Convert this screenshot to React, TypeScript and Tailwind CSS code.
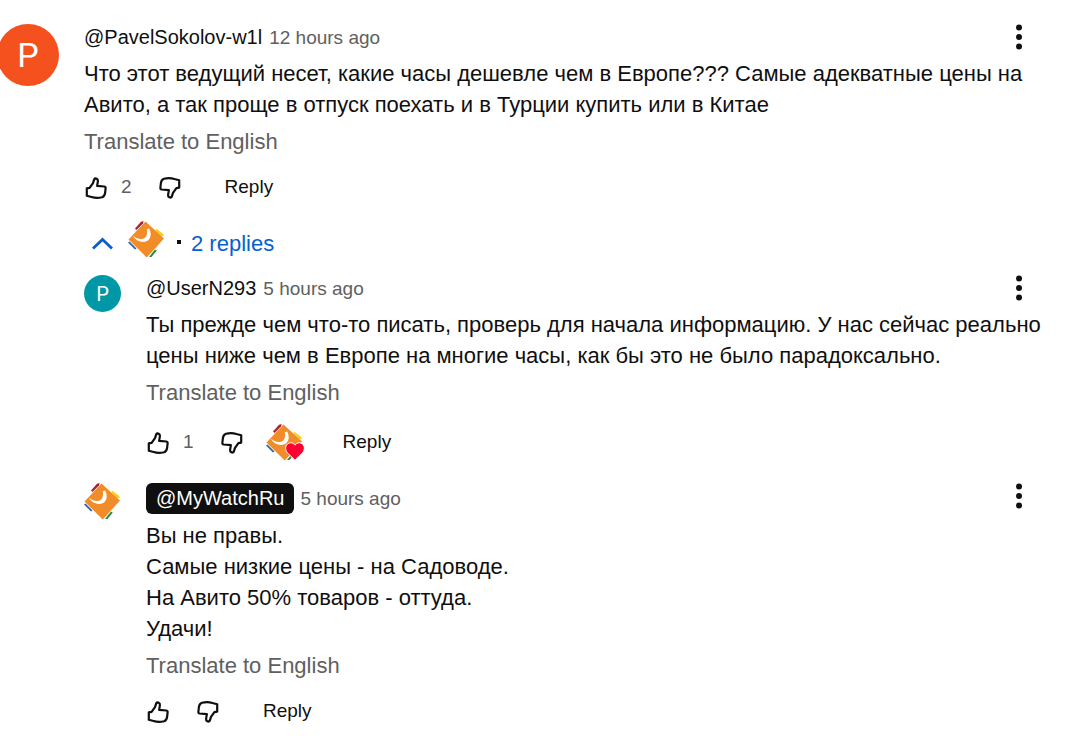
import type { ReactNode } from 'react'

type CommentProps = {
  author: string
  time: string
  lines: string[]
  avatar: ReactNode
  likes?: number
  hearted?: boolean
  isCreator?: boolean
}

const ThumbIcon = ({ down = false }: { down?: boolean }) => (
  <svg
    viewBox="0 0 24 24"
    className={`size-6 ${down ? 'rotate-180' : ''}`}
    fill="none"
    stroke="currentColor"
    strokeWidth="2.2"
    strokeLinejoin="round"
    aria-hidden="true"
  >
    <path d="M2.8 12.4 5.6 11.9 9 7.2 10.2 3.4Q11 2 12.7 2.8 14.2 3.6 13.9 5.4L13.1 9.9 20.4 10.5Q21.8 10.8 21.6 12.4L21.1 17Q20.6 20.4 18 21.2 12.6 22.6 7.6 21L2.8 19.8Z" />
  </svg>
)

const LetterAvatar = ({ letter, small = false }: { letter: string; small?: boolean }) => (
  <div
    className={`mt-0.5 flex items-center justify-center rounded-full text-white font-[Roboto,sans-serif] ${
      small ? 'size-[37px] bg-[#0097a7] text-[20px]' : 'size-[62px] bg-[#f4511e] text-[34px]'
    }`}
  >
    {letter}
  </div>
)

const ChannelAvatar = () => (
  <svg viewBox="0 0 37 37" className="size-[37px] shrink-0" aria-hidden="true">
    <path d="M7 7.5 13 0.8 15.5 0 15 2.5 8.5 9Z" fill="#b3202c" />
    <path d="M28 7.5 35 12.8 36 15 33 15 27.5 9.5Z" fill="#f7cf1d" />
    <path d="M0 21.5 1.5 20.5 8.5 27.5 7 28.5Z" fill="#2c62ad" />
    <path d="M21 36 27 28.5 28.8 29.5 23.5 36Z" fill="#2a8a3a" />
    <path d="M17.5 0.5 36 17.5 18.8 36.5 0.5 18.5Z" fill="#f28c28" />
    <path
      d="M5 14.8C8.5 17.6 12 18.6 15 17.8 18.6 16.6 19.6 13 18.8 8.2L21.2 7.6C23.4 12 23.2 16.4 20.6 19 16.6 22.6 8.6 21.4 5 14.8Z"
      fill="#fff"
    />
  </svg>
)

const MoreButton = () => (
  <button type="button" aria-label="Action menu" className="block">
    <svg viewBox="0 0 26 26" className="size-[26px]" fill="currentColor" aria-hidden="true">
      <circle cx="13" cy="3.5" r="3" />
      <circle cx="13" cy="13" r="3" />
      <circle cx="13" cy="22.5" r="3" />
    </svg>
  </button>
)

const HeartedBadge = () => (
  <div className="relative ml-[22px]">
    <ChannelAvatar />
    <svg viewBox="0 0 20 20" className="absolute -right-0.5 bottom-0 size-5" aria-hidden="true">
      <path
        d="M10 19.2 2.8 12.3C-1.4 8 1 1.8 5.6 1.8 7.6 1.8 9.2 2.8 10 4.2 10.8 2.8 12.4 1.8 14.4 1.8 19 1.8 21.4 8 17.2 12.3Z"
        fill="#ff0033"
        stroke="#fff"
        strokeWidth="1"
      />
    </svg>
  </div>
)

const Comment = ({
  author,
  time,
  lines,
  avatar,
  likes,
  hearted = false,
  isCreator = false,
}: CommentProps) => (
  <article className="flex gap-[25px]">
    <div className="shrink-0">{avatar}</div>
    <div className="min-w-0 flex-1">
      <header className="flex h-[31px] items-start leading-[31px]">
        <a
          href="#channel"
          className={`text-[20px] ${
            isCreator ? 'mr-1.5 rounded-md bg-[#0f0f0f] px-2.5 text-white' : 'mr-[7px]'
          }`}
        >
          {author}
        </a>
        <a href="#comment" className="text-[19px] text-[#606060]">
          {time}
        </a>
        <div className={`mr-[43px] ml-auto ${isCreator ? '' : 'mt-0.5'}`}>
          <MoreButton />
        </div>
      </header>
      <div className={`mr-[30px] text-[22px] leading-[31px] ${isCreator ? 'mt-1.5' : 'mt-[5px]'}`}>
        {lines.map((line) => (
          <p key={line}>{line}</p>
        ))}
      </div>
      <button type="button" className="mt-1.5 block text-[22px] leading-[31px] text-[#606060]">
        Translate to English
      </button>
      <div className={`flex h-[37px] items-center text-[19px] ${hearted ? 'mt-4' : 'mt-3'}`}>
        <button type="button" aria-label="Like">
          <ThumbIcon />
        </button>
        {likes !== undefined && <span className="ml-[13px] text-[#606060]">{likes}</span>}
        <button type="button" aria-label="Dislike" className="ml-[26px]">
          <ThumbIcon down />
        </button>
        {hearted && <HeartedBadge />}
        <button type="button" className={hearted ? 'ml-10' : 'ml-[43px]'}>
          Reply
        </button>
      </div>
    </div>
  </article>
)

const App = () => (
  <main className="min-h-screen overflow-hidden bg-white pt-[22px] font-['Liberation_Sans',Arial,sans-serif] text-[#0f0f0f]">
    <div className="-ml-[3px]">
      <Comment
        author="@PavelSokolov-w1l"
        time="12 hours ago"
        lines={[
          'Что этот ведущий несет, какие часы дешевле чем в Европе??? Самые адекватные цены на Авито, а так проще в отпуск поехать и в Турции купить или в Китае',
        ]}
        avatar={<LetterAvatar letter="P" />}
        likes={2}
      />
      <section className="ml-[87px]">
        <button
          type="button"
          className="mt-[15px] flex h-[37px] items-center text-[22px] text-[#065fd4]"
        >
          <svg viewBox="0 0 24 24" className="mt-2 ml-1.5 size-6" fill="none" aria-hidden="true">
            <path d="M3 16.5 12.5 7.5 22 16.5" stroke="currentColor" strokeWidth="2.8" />
          </svg>
          <span className="ml-3.5">
            <ChannelAvatar />
          </span>
          <span className="mt-1 mr-2.5 ml-3 size-1 bg-[#0f0f0f]" />
          <span className="mt-2">2 replies</span>
        </button>
        <div className="mt-[15px] flex flex-col gap-[22px]">
          <Comment
            author="@UserN293"
            time="5 hours ago"
            lines={[
              'Ты прежде чем что-то писать, проверь для начала информацию. У нас сейчас реально цены ниже чем в Европе на многие часы, как бы это не было парадоксально.',
            ]}
            avatar={<LetterAvatar letter="P" small />}
            likes={1}
            hearted
          />
          <Comment
            author="@MyWatchRu"
            time="5 hours ago"
            lines={[
              'Вы не правы.',
              'Самые низкие цены - на Садоводе.',
              'На Авито 50% товаров - оттуда.',
              'Удачи!',
            ]}
            avatar={<ChannelAvatar />}
            isCreator
          />
        </div>
      </section>
    </div>
  </main>
)

export default App
